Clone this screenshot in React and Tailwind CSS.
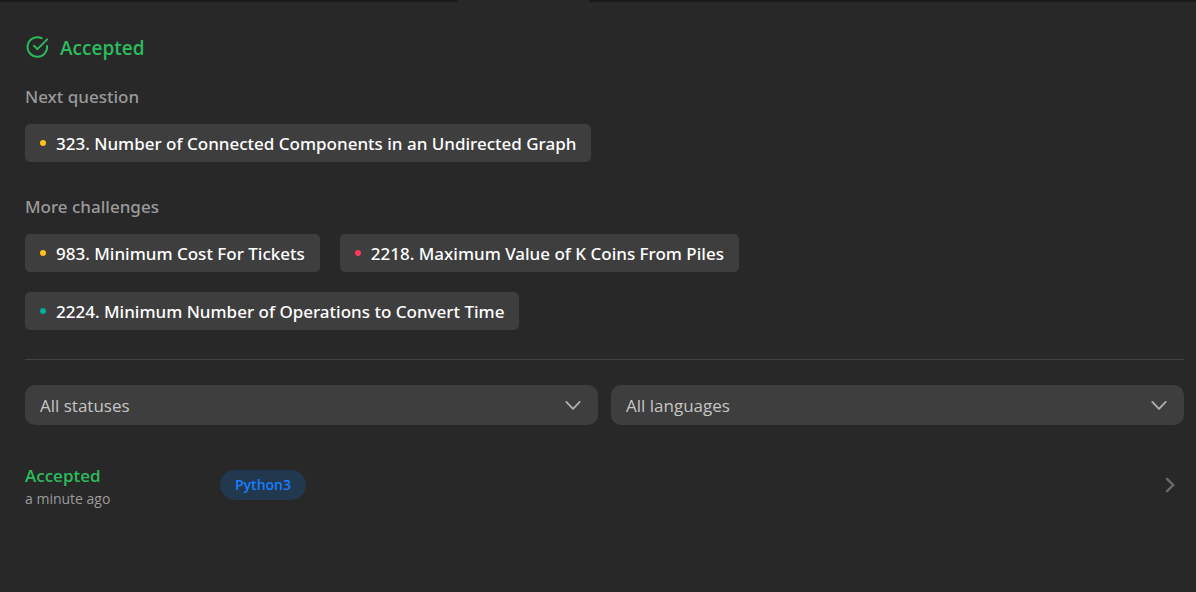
import React from "react";

const challenges = [
  { title: "983. Minimum Cost For Tickets", dot: "bg-[#ffc01e]" },
  { title: "2218. Maximum Value of K Coins From Piles", dot: "bg-[#ff375f]" },
  { title: "2224. Minimum Number of Operations to Convert Time", dot: "bg-[#00af9b]" },
];

function Question({ title, dot }) {
  return (
    <a
      href="#"
      className="flex h-[38px] items-center gap-[10px] rounded-[5px] bg-[#3e3e3e] px-[15px] font-['Noto_Sans',sans-serif] text-[17px] font-medium whitespace-nowrap text-white"
    >
      <span className={`size-[6px] shrink-0 rounded-full ${dot}`} />
      <span className="pt-[2px]">{title}</span>
    </a>
  );
}

function Filter({ label, option }) {
  return (
    <div className="relative flex-1">
      <select
        aria-label={label}
        className="block h-10 w-full appearance-none rounded-[10px] bg-[#3e3e3e] px-[15px] pt-[9px] pb-[7px] text-[17px] leading-6 text-[#c5c5c5] outline-none"
      >
        <option>{option}</option>
      </select>
      <svg
        viewBox="0 0 16 10"
        className="pointer-events-none absolute top-[15px] right-[17px] h-[10px] w-4"
        fill="none"
        stroke="#b4b4b4"
        strokeWidth="1.7"
        strokeLinecap="round"
        strokeLinejoin="round"
        aria-hidden="true"
      >
        <path d="M1.3 1.8 8 8.8l6.7-7" />
      </svg>
    </div>
  );
}

export default function App() {
  return (
    <div className="min-h-screen bg-[#282828] font-['Open_Sans','Noto_Sans',sans-serif] text-[17px] leading-6">
      <div className="flex h-[2px]">
        <div className="w-[457px] bg-[#1a1a1a]" />
        <div className="w-[132px]" />
        <div className="flex-1 bg-[#1a1a1a]" />
      </div>
      <main className="pt-[30px] pr-3 pb-6 pl-[25px]">
        <h1 className="flex h-8 items-center gap-[10px] text-[19px] font-semibold text-[#2cbb5d]">
          <svg
            viewBox="0 0 25 25"
            className="size-[25px]"
            fill="none"
            stroke="currentColor"
            strokeWidth="2"
            strokeLinecap="round"
            strokeLinejoin="round"
            aria-hidden="true"
          >
            <path d="M16.6 2.2A9.8 9.8 0 1 0 22.1 10" />
            <path d="m9 9.8 3.4 3.3L22.2 3.4" />
          </svg>
          Accepted
        </h1>
        <h2 className="mt-[21px] font-['Noto_Sans',sans-serif] font-medium text-[#9a9a9a]">
          Next question
        </h2>
        <div className="mt-[15px] flex">
          <Question
            title="323. Number of Connected Components in an Undirected Graph"
            dot="bg-[#ffc01e]"
          />
        </div>
        <h2 className="mt-[33px] font-['Noto_Sans',sans-serif] font-medium text-[#9a9a9a]">
          More challenges
        </h2>
        <div className="mt-[15px] flex max-w-[800px] flex-wrap gap-5">
          {challenges.map((item) => (
            <Question key={item.title} {...item} />
          ))}
        </div>
        <hr className="mt-[29px] border-[#424242]" />
        <div className="mt-[25px] flex gap-[13px]">
          <Filter label="Status" option="All statuses" />
          <Filter label="Language" option="All languages" />
        </div>
        <a href="#" className="mt-[37px] flex items-center pr-2">
          <span className="w-[195px] pt-[2px]">
            <span className="block font-semibold text-[#2cbb5d]">Accepted</span>
            <span className="block text-[14px] leading-[22px] text-[#9a9a9a]">a minute ago</span>
          </span>
          <span className="mb-[2px] flex h-[30px] items-center rounded-full bg-[#21384f] px-[15px] text-[14px] font-semibold text-[#1a7eff]">
            Python3
          </span>
          <svg
            viewBox="0 0 12 18"
            className="mb-[2px] ml-auto h-[18px] w-3"
            fill="none"
            stroke="#6b6b6b"
            strokeWidth="2.4"
            strokeLinecap="round"
            strokeLinejoin="round"
            aria-hidden="true"
          >
            <path d="m3 2.8 6.3 6.2L3 15.2" />
          </svg>
        </a>
      </main>
    </div>
  );
}
